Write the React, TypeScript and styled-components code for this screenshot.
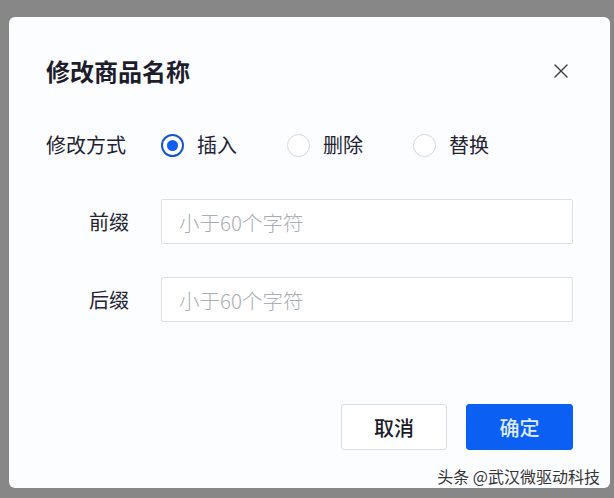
import React, { useState } from "react";
import styled, { createGlobalStyle } from "styled-components";

const GlobalStyle = createGlobalStyle`
  html, body {
    margin: 0;
    padding: 0;
    background-color: #878787;
  }
  body {
    font-family: "Noto Sans CJK SC", "Noto Sans", sans-serif;
    overflow: hidden;
  }
`;

const Page = styled.div`
  width: 614px;
  height: 498px;
  padding: 17px 4px 0 9px;
  box-sizing: border-box;
`;

const Dialog = styled.div`
  position: relative;
  width: 601px;
  height: 471px;
  box-sizing: border-box;
  padding: 0 37px 38px 37px;
  border-radius: 6px;
  background-color: #fcfdff;
  display: flex;
  flex-direction: column;
`;

const Header = styled.div`
  margin-top: 34px;
  height: 40px;
  display: flex;
  align-items: center;
  justify-content: space-between;
`;

const Title = styled.h2`
  margin: 0;
  font-size: 24px;
  font-weight: 600;
  line-height: 40px;
  color: #1d1d2b;
`;

const CloseButton = styled.button`
  width: 22px;
  height: 22px;
  margin-right: 1px;
  padding: 0;
  border: none;
  background: transparent;
  display: flex;
  align-items: center;
  justify-content: center;
  cursor: pointer;
`;

const Form = styled.div`
  margin-top: 33px;
  display: grid;
  grid-template-columns: 83px 1fr;
  column-gap: 32px;
  row-gap: 33px;
  align-items: center;
`;

const Label = styled.label<{ $align?: "left" | "right" }>`
  font-size: 20px;
  line-height: 28px;
  color: #232330;
  font-weight: 400;
  text-align: ${(p) => p.$align ?? "right"};
  white-space: nowrap;
`;

const RadioGroup = styled.div`
  height: 42px;
  display: flex;
  align-items: center;
  gap: 50px;
`;

const RadioItem = styled.label`
  display: flex;
  align-items: center;
  gap: 13px;
  cursor: pointer;
`;

const RadioCircle = styled.span<{ $checked: boolean }>`
  width: 23px;
  height: 23px;
  box-sizing: border-box;
  border-radius: 50%;
  border: ${(p) => (p.$checked ? "2px solid #1a55c9" : "1px solid #d3d8df")};
  background-color: #ffffff;
  display: flex;
  align-items: center;
  justify-content: center;

  &::after {
    content: "";
    width: 11px;
    height: 11px;
    border-radius: 50%;
    background-color: #0e5ff0;
    display: ${(p) => (p.$checked ? "block" : "none")};
  }
`;

const RadioText = styled.span`
  font-size: 20px;
  line-height: 28px;
  color: #232330;
  font-weight: 400;
`;

const Input = styled.input`
  height: 45px;
  width: 100%;
  box-sizing: border-box;
  padding: 0 17px;
  border: 1px solid #dbe0e7;
  border-radius: 2px;
  background-color: #ffffff;
  font-family: inherit;
  font-size: 20.5px;
  color: #1f1f2c;
  outline: none;

  &::placeholder {
    color: #a9aeb6;
    font-weight: 300;
  }
`;

const Footer = styled.div`
  margin-top: auto;
  display: flex;
  justify-content: flex-end;
  gap: 19px;
`;

const Button = styled.button<{ $primary?: boolean }>`
  height: 46px;
  width: ${(p) => (p.$primary ? "107px" : "106px")};
  box-sizing: border-box;
  border-radius: 3px;
  border: 1px solid ${(p) => (p.$primary ? "#0b5ff2" : "#d9dde3")};
  background-color: ${(p) => (p.$primary ? "#0b5ff2" : "#ffffff")};
  color: ${(p) => (p.$primary ? "#dfeaff" : "#1b1b27")};
  font-family: inherit;
  font-size: 20px;
  font-weight: 500;
  cursor: pointer;
`;

const Watermark = styled.div`
  position: absolute;
  right: 10px;
  bottom: 2px;
  font-size: 16px;
  line-height: 20px;
  color: #353535;
  text-shadow: 0 0 2px #ffffff, 0 0 1px #ffffff;
  pointer-events: none;
`;

const modes = ["插入", "删除", "替换"];

const App = () => {
  const [mode, setMode] = useState("插入");

  return (
    <>
      <GlobalStyle />
      <Page>
        <Dialog>
          <Header>
            <Title>修改商品名称</Title>
            <CloseButton aria-label="关闭">
              <svg width="14" height="14" viewBox="0 0 14 14">
                <path
                  d="M1 1L13 13M13 1L1 13"
                  stroke="#3a3a46"
                  strokeWidth="1.4"
                  strokeLinecap="round"
                />
              </svg>
            </CloseButton>
          </Header>
          <Form>
            <Label $align="left">修改方式</Label>
            <RadioGroup>
              {modes.map((m) => (
                <RadioItem key={m} onClick={() => setMode(m)}>
                  <RadioCircle $checked={mode === m} />
                  <RadioText>{m}</RadioText>
                </RadioItem>
              ))}
            </RadioGroup>
            <Label>前缀</Label>
            <Input placeholder="小于60个字符" />
            <Label>后缀</Label>
            <Input placeholder="小于60个字符" />
          </Form>
          <Footer>
            <Button>取消</Button>
            <Button $primary>确定</Button>
          </Footer>
          <Watermark>头条 @武汉微驱动科技</Watermark>
        </Dialog>
      </Page>
    </>
  );
};

export default App;
